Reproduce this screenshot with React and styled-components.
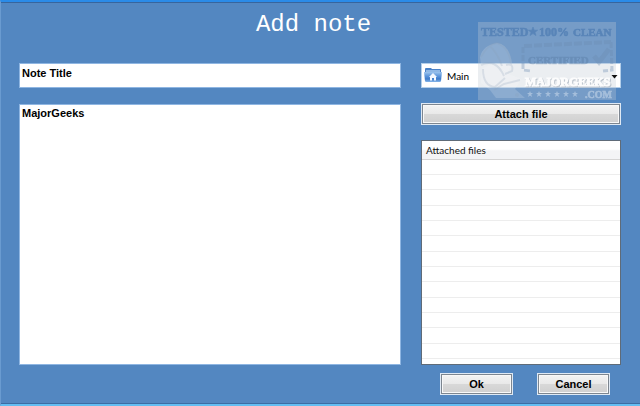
import React, { useState } from 'react'
import styled, { createGlobalStyle } from 'styled-components'

const App = () => {
  const [title, setTitle] = useState('Note Title')
  const [note, setNote] = useState('MajorGeeks')

  return (
    <>
      <GlobalStyle />
      <Window>
        <Heading>Add note</Heading>
        <Columns>
          <Column $gap={16}>
            <TitleInput
              aria-label="Note title"
              value={title}
              onChange={(e) => setTitle(e.target.value)}
            />
            <NoteArea
              aria-label="Note text"
              value={note}
              onChange={(e) => setNote(e.target.value)}
            />
          </Column>
          <Column $gap={15}>
            <Folder>
              <FolderIcon />
              <FolderSelect aria-label="Folder">
                <option>Main</option>
              </FolderSelect>
              <Stamp />
              <Arrow viewBox="0 0 7 4">
                <path d="M0.500 0h6L3.500 3.500z" fill="#111" />
              </Arrow>
            </Folder>
            <Button type="button">Attach file</Button>
            <FileList>
              <FileTable>
                <thead>
                  <tr>
                    <th>Attached files</th>
                  </tr>
                </thead>
                <tbody>
                  {Array.from({ length: 13 }, (_, i) => (
                    <tr key={i}>
                      <td />
                    </tr>
                  ))}
                </tbody>
              </FileTable>
            </FileList>
          </Column>
        </Columns>
        <Footer>
          <Button type="button" $small>Ok</Button>
          <Button type="button" $small>Cancel</Button>
        </Footer>
      </Window>
    </>
  )
}

const FolderIcon = () => (
  <FolderSvg viewBox="0 0 18 16">
    <defs>
      <linearGradient id="folder" x1="0" y1="0" x2="0" y2="1">
        <stop offset="0" stopColor="#9cc4ee" />
        <stop offset="0.4" stopColor="#5c96dc" />
        <stop offset="0.7" stopColor="#3f7ccb" />
        <stop offset="1" stopColor="#86b6ea" />
      </linearGradient>
    </defs>
    <path d="M1 2q0-1 1-1h5l1 1h8q1 0 1 1V6H1z" fill="#4a82c8" />
    <path d="M2 3h14v2H2z" fill="#8fb8e6" />
    <path d="M0 5h18l-1 9q-.2 1-1.200 1H2.200q-1 0-1.200-1z" fill="url(#folder)" />
    <path d="M9 6l4 4h-1v3.500H10V11H8v2.500H6V10H5z" fill="#f2f8ff" />
  </FolderSvg>
)

const Stamp = () => (
  <StampSvg viewBox="0 0 138 78" aria-hidden="true">
    <rect width="138" height="78" fill="#c0cad5" opacity="0.32" />
    <g fill="#4f7db3" stroke="#4f7db3" strokeWidth="0.6" opacity="0.75">
      <text x="3" y="14" fontSize="12">TESTED</text>
      <path d="M55 5l1.300 3.200h3.400l-2.700 2.100 1 3.300-3-2-3 2 1-3.300-2.700-2.100h3.400z" />
      <text x="61" y="14" fontSize="12">100%</text>
      <text x="95" y="14" fontSize="11">CLEAN</text>
    </g>
    <g fill="none" stroke="#6b8bb2" opacity="0.35">
      <path d="M46 24L133 20" strokeWidth="4" strokeDasharray="8 2" />
      <path d="M45 25v23l8 1M133 20l1 28-9 1" strokeWidth="3" strokeDasharray="6 2" />
      <path d="M116 34l5 6 10-13" strokeWidth="5" />
    </g>
    <g opacity="0.4">
      <text x="50" y="42" fontSize="11" fill="#587ba4" stroke="#587ba4" strokeWidth="0.6">CERTIFIED</text>
    </g>
    <g fill="#fff" opacity="0.16">
      <path d="M2 35Q5 23 19 21Q31 22 34 41L29 52Q17 38 3 43z" />
      <path d="M4 47Q16 38 26 50L43 57L37 67L47 76H18L12 68L3 61z" />
    </g>
    <g fill="none" stroke="#8a9fb8" opacity="0.22" strokeWidth="2">
      <path d="M3 35Q10 22 19 21Q32 26 33 43M3 43Q18 36 26 54M5 47q0 17 12 18l10-9M16 68l10-6 16-4" />
      <path d="M12 24q8 8 12 20M28 43q8-2 6 6l-7 3" />
      <circle cx="39" cy="73" r="1" />
    </g>
    <StampName x="47" y="64" fontSize="12">MAJORGEEKS</StampName>
    <g fill="#d4e1ef" opacity="0.5">
      <text x="107" y="76" fontSize="10" stroke="#d4e1ef" strokeWidth="0.6">.COM</text>
      {[52, 61, 70, 79, 88, 97].map((x) => (
        <path key={x} transform={`translate(${x} 72)`} d="M0-3l.8 2H3L1.200.5 2 3 0 1.500-2 3-1.200.5-3-1h2.200z" />
      ))}
    </g>
  </StampSvg>
)

const GlobalStyle = createGlobalStyle`
* {
    box-sizing: border-box;
}
body {
    margin: 0;
}
input, textarea, button, select {
    margin: 0;
    border-radius: 0;
    font: bold 11px/14px "Liberation Sans", Arial, sans-serif;
    color: #000;
}
`

const Window = styled.main`
display: flex;
flex-direction: column;
min-height: 100vh;
border-top: 2px solid #2a8be8;
border-bottom: 2px solid #63bdf2;
border-left: 1px solid #6a9bd0;
background: #5387c1;
box-shadow: inset 0 1px #37659d, inset 0 -1px #3c6ca4;
`

const Heading = styled.h1`
margin: 0;
padding: 9px 14px 24px 0;
font: 24px/28px "Liberation Mono", "Courier New", monospace;
color: #fff;
text-align: center;
`

const Columns = styled.div`
display: grid;
grid-template-columns: 1fr 200px;
gap: 20px;
flex: 1;
padding: 0 19px 0 18px;
`

const Column = styled.div`
display: flex;
flex-direction: column;
gap: ${(props) => props.$gap}px;
`

const TitleInput = styled.input`
width: 100%;
height: 25px;
padding: 2px 2px 7px;
border: 1px solid #8fb6e2;
background: #fff;
`

const NoteArea = styled.textarea`
flex: 1;
width: 100%;
padding: 1px 2px;
border: 1px solid #8fb6e2;
background: #fff;
resize: none;
`

const Folder = styled.div`
position: relative;
display: flex;
height: 25px;
`

const FolderSelect = styled.select`
width: 100%;
padding: 0 20px 0 25px;
border: 1px solid #b4cfea;
background: #fff;
appearance: none;
font: 10px/14px Lato, "Open Sans", sans-serif;
`

const FolderSvg = styled.svg`
position: absolute;
left: 3px;
top: 4px;
width: 18px;
height: 16px;
pointer-events: none;
`

const Arrow = styled.svg`
position: absolute;
right: 3px;
top: 12px;
width: 7px;
height: 4px;
pointer-events: none;
`

const StampSvg = styled.svg`
position: absolute;
right: 5px;
bottom: -12px;
width: 138px;
height: 78px;
pointer-events: none;
font-family: "Liberation Serif", "Times New Roman", serif;
font-weight: bold;
`

const StampName = styled.text`
fill: #fff;
stroke: #fff;
stroke-width: 1px;
opacity: 0.85;
filter: drop-shadow(1px 1px 0 #b6bec8);
`

const Button = styled.button`
width: ${(props) => (props.$small ? '73px' : '100%')};
height: 22px;
padding: 0;
border: 1px solid #dfe9f4;
background: linear-gradient(#f4f4f4, #e9e9e9 48%, #d8d8d8 52%, #cfcfcf);
box-shadow: inset 0 0 0 1px #7d8690, inset 0 0 0 2px #f8f8f8;
`

const FileList = styled.div`
flex: 1;
border: 1px solid #5f6b78;
background: #fff;
`

const FileTable = styled.table`
width: 100%;
height: 218px;
border-collapse: collapse;
th {
    height: 18px;
    padding: 0 4px;
    border-bottom: 1px solid #d5d5d5;
    background: linear-gradient(#fff 45%, #f3f4f6 55%, #f3f4f6);
    font: 10px/14px Lato, "Open Sans", sans-serif;
    color: #111;
    text-align: left;
}
td {
    padding: 0;
    border-bottom: 1px solid #ededed;
}
`

const Footer = styled.footer`
display: flex;
justify-content: flex-end;
gap: 24px;
padding: 8px 30px 9px 0;
`

export default App
